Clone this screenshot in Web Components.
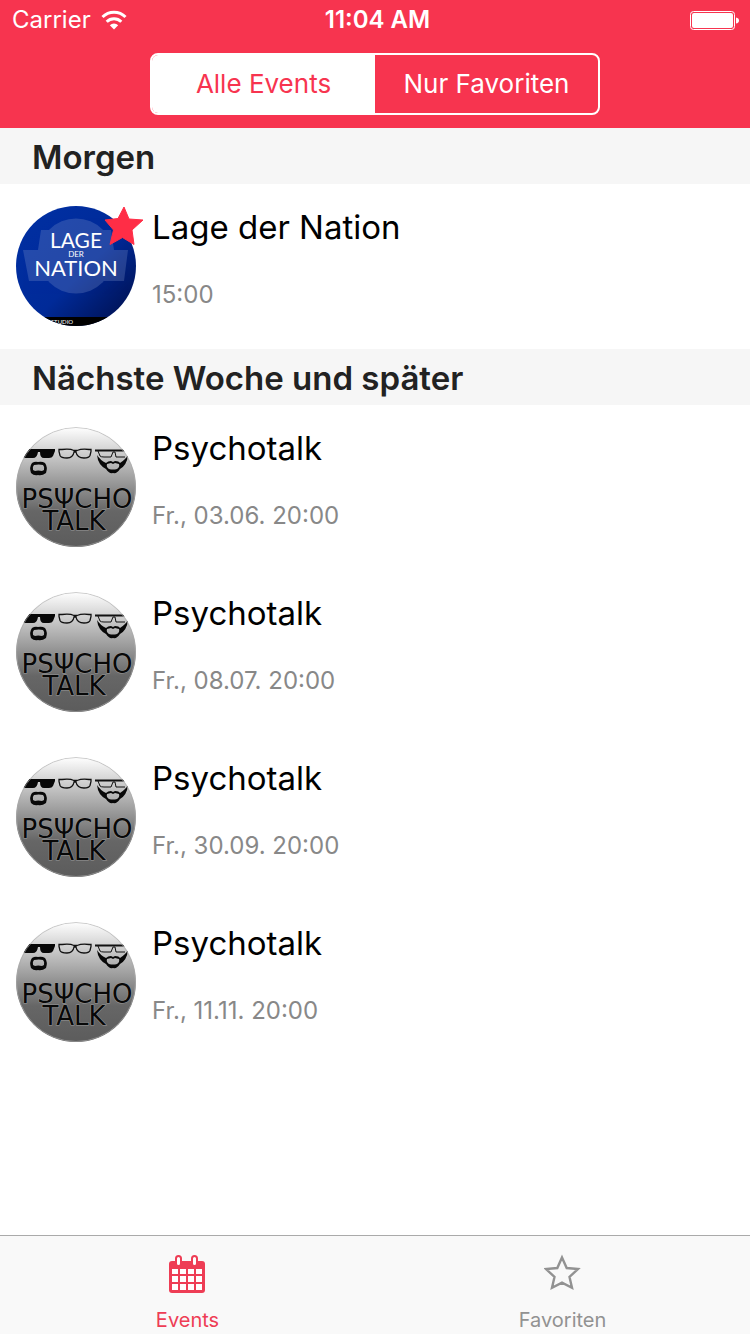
<!DOCTYPE html>
<html lang="de">
<head>
<meta charset="utf-8">
<meta name="viewport" content="width=device-width, initial-scale=1">
<title>Events</title>
<style>
  body { margin: 0; background: #fff; color: #000; font-family: Inter, "Liberation Sans", sans-serif; }
</style>
</head>
<body>
<events-app></events-app>

<template id="t-app">
  <style>
    :host { display: flex; flex-direction: column; min-height: 100vh; }
    header { background: #f7344f; color: #fff; padding-bottom: 13px; }
    main { flex: 1; }
  </style>
  <header>
    <status-bar></status-bar>
    <segmented-control>
      <span slot="first">Alle Events</span>
      <span slot="second">Nur Favoriten</span>
    </segmented-control>
  </header>
  <main>
    <event-section>
      <span slot="title">Morgen</span>
      <event-row favorite><lage-cover slot="cover"></lage-cover>Lage der Nation<span slot="time">15:00</span></event-row>
    </event-section>
    <event-section>
      <span slot="title">Nächste Woche und später</span>
      <event-row><psycho-cover slot="cover"></psycho-cover>Psychotalk<span slot="time">Fr., 03.06. 20:00</span></event-row>
      <event-row><psycho-cover slot="cover"></psycho-cover>Psychotalk<span slot="time">Fr., 08.07. 20:00</span></event-row>
      <event-row><psycho-cover slot="cover"></psycho-cover>Psychotalk<span slot="time">Fr., 30.09. 20:00</span></event-row>
      <event-row><psycho-cover slot="cover"></psycho-cover>Psychotalk<span slot="time">Fr., 11.11. 20:00</span></event-row>
    </event-section>
  </main>
  <tab-bar></tab-bar>
</template>

<template id="t-status">
  <style>
    :host { display: grid; grid-template-columns: 1fr auto 1fr; align-items: center; height: 40px; padding: 0 11px 0 12px; font-size: 24px; line-height: 40px; }
    .carrier { display: flex; align-items: center; gap: 10px; }
    .time { font-weight: 600; padding-left: 4px; }
    .battery { justify-self: end; }
    svg { display: block; }
  </style>
  <span class="carrier">Carrier
    <svg width="26" height="20" viewBox="0 0 26 20" fill="none" stroke="#fff" stroke-width="3" aria-hidden="true">
      <path d="M1.500 7a16.300 16.300 0 0 1 23 0M5.700 11.800a10.400 10.400 0 0 1 14.600 0"/>
      <path d="M13 19.500l-4.200-4.200a6 6 0 0 1 8.400 0z" fill="#fff" stroke="none"/>
    </svg>
  </span>
  <span class="time">11:04 AM</span>
  <svg class="battery" width="49" height="20" viewBox="0 0 49 20" aria-hidden="true">
    <rect x=".5" y="1.500" width="44" height="18" rx="3" fill="none" stroke="#fff"/>
    <rect x="2" y="3" width="41" height="15" rx="2" fill="#fff"/>
    <path d="M46 7.500q3 .5 3 3t-3 3z" fill="#fff"/>
  </svg>
</template>

<template id="t-segmented">
  <style>
    :host { display: grid; grid-template-columns: 1fr 1fr; box-sizing: border-box; width: 60%; height: 62px; margin: 13px auto 0; border: 2px solid #fff; border-radius: 8px; overflow: hidden; }
    button { border: 0; padding: 0; margin: 0; font: inherit; font-size: 26px; line-height: 58px; color: #fff; background: none; }
    button[aria-pressed="true"] { background: #fff; color: #f7344f; }
  </style>
  <button type="button" aria-pressed="true"><slot name="first"></slot></button>
  <button type="button" aria-pressed="false"><slot name="second"></slot></button>
</template>

<template id="t-section">
  <style>
    :host { display: block; }
    h2 { margin: 0; padding: 2px 32px 0; background: #f6f6f6; color: #222; font-size: 33px; font-weight: 600; line-height: 54px; }
  </style>
  <h2><slot name="title"></slot></h2>
  <slot></slot>
</template>

<template id="t-row">
  <style>
    :host { display: flex; gap: 16px; box-sizing: border-box; min-height: 165px; padding: 22px 16px; }
    .cover { position: relative; flex: none; width: 120px; height: 120px; }
    .star { display: none; position: absolute; top: 0; right: -8px; }
    :host([favorite]) .star { display: block; }
    h3 { margin: 0; font-size: 33px; font-weight: 400; line-height: 42px; }
    p { margin: 32px 0 0; color: #888; font-size: 24px; line-height: 30px; }
  </style>
  <div class="cover">
    <slot name="cover"></slot>
    <svg class="star" width="40" height="40" viewBox="0 0 40 40" aria-label="Favorit">
      <path d="M20 1l5 12 14 1-11 10 2 14.500-11.500-7L6 38.500 9.500 24 1 14l13-1.500z" fill="#ff2d46" stroke="#ff2d46" stroke-linejoin="round"/>
    </svg>
  </div>
  <div>
    <h3><slot></slot></h3>
    <p><slot name="time"></slot></p>
  </div>
</template>

<template id="t-lage">
  <style>
    :host { display: block; }
    svg { display: block; border-radius: 50%; }
    text { font-family: Lato, sans-serif; fill: #fff; text-anchor: middle; }
  </style>
  <svg width="120" height="120" viewBox="0 0 120 120">
    <defs>
      <linearGradient id="g" x1="0" y1="0" x2="1" y2="1">
        <stop offset="0" stop-color="#0030a4"/><stop offset=".55" stop-color="#002a98"/><stop offset="1" stop-color="#000c44"/>
      </linearGradient>
    </defs>
    <rect width="120" height="120" fill="url(#g)"/>
    <g fill="#8ba0cf" opacity=".26">
      <path d="M25 24h70l3 20h14l-4 31H13L7 44h15z"/>
      <circle cx="60" cy="50" r="37.500"/>
    </g>
    <text x="60" y="42" font-size="21">LAGE</text>
    <text x="60" y="51" font-size="8">DER</text>
    <text x="60" y="70" font-size="22">NATION</text>
    <rect y="111" width="120" height="9" fill="#000"/>
    <text x="46" y="118" font-size="6">STUDIO</text>
  </svg>
</template>

<template id="t-psycho">
  <style>
    :host { display: block; }
    svg { display: block; border-radius: 50%; }
    text { font-family: "DejaVu Sans", sans-serif; font-size: 26px; text-anchor: middle; fill: #080808; stroke: #999; stroke-width: 1px; paint-order: stroke; }
  </style>
  <svg width="120" height="120" viewBox="0 0 120 120">
    <defs>
      <linearGradient id="g" x1="0" y1="0" x2="0" y2="1">
        <stop offset="0" stop-color="#fff"/><stop offset=".3" stop-color="#bbb"/><stop offset=".7" stop-color="#666"/><stop offset="1" stop-color="#5c5c5c"/>
      </linearGradient>
    </defs>
    <rect width="120" height="120" fill="url(#g)"/>
    <path d="M9 22h30v2l-2 5q-1 2-4 2h-5q-4 0-4-6h-2q-1 6-5 6H9q-2 0-2-2z" fill="#080808"/>
    <g fill="none" stroke="#111">
      <path d="M43 22.500h3q8-1 12 1h3q5-2 12-1h2v2l-1 4q-1 2.500-6 2.500-7 0-8-6h-2q-1 6-7 6-6 0-7-2.500l-1-4z" stroke-width="1.300"/>
      <path d="M79 23.500h33" stroke-width="2"/>
      <path d="M82 24l2 5q1 1 4 1h7l2-5h2l1 5h9"/>
    </g>
    <path fill-rule="evenodd" d="M16 36q3-2 6-1 4-1 7 1 3 4 1 10-4 3-8 2-4 1-7-2-2-6 1-10zM18 38q-2 2-1 5l2 1q3-1 7 0l2-1q1-3-1-5-4-1-9 0z" fill="#080808"/>
    <path fill-rule="evenodd" d="M81 28q3 5 9 8 2-2 5-2l2 1 2-1q4 0 5 2 6-4 8-8-1 10-8 14-3 5-7 4-4 1-7-4-8-4-9-14zM91 37q-1 3 2 5 4 1 8 0 3-2 2-5l-4-1-2 1-2-1z" fill="#080808"/>
    <text x="61" y="81">PSΨCHO</text>
    <text x="58" y="103">TALK</text>
    <circle cx="60" cy="60" r="59.500" fill="none" stroke="#aaa" stroke-opacity=".6"/>
  </svg>
</template>

<template id="t-tabs">
  <style>
    :host { display: block; background: #f9f9f9; border-top: 1px solid #aaa; }
    nav { display: grid; grid-template-columns: 1fr 1fr; }
    a { display: flex; flex-direction: column; align-items: center; gap: 12px; height: 80px; padding: 18px 0 0; color: #929292; text-decoration: none; font-size: 20px; line-height: 28px; }
    a[aria-current] { color: #ee3d55; }
    svg { display: block; }
  </style>
  <nav>
    <a href="#events" aria-current="page">
      <svg width="38" height="40" viewBox="0 0 38 40" aria-hidden="true">
        <path d="M3 7h30q3 0 3 3v26q0 3-3 3H3q-3 0-3-3V10q0-3 3-3z" fill="currentColor"/>
        <path d="M3 15h6v5H3zM11 15h6v5h-6zM19 15h6v5h-6zM27 15h6v5h-6zM3 22h6v6H3zM11 22h6v6h-6zM19 22h6v6h-6zM27 22h6v6h-6zM3 30h6v6H3zM11 30h6v6h-6zM19 30h6v6h-6zM27 30h6v6h-6z" fill="#fff"/>
        <rect x="7" y="2" width="5" height="10" rx="2.500" fill="#fff" stroke="currentColor" stroke-width="2"/>
        <rect x="23" y="2" width="5" height="10" rx="2.500" fill="#fff" stroke="currentColor" stroke-width="2"/>
      </svg>
      <span>Events</span>
    </a>
    <a href="#favoriten">
      <svg width="38" height="40" viewBox="0 0 38 40" fill="none" stroke="currentColor" stroke-width="2.400" aria-hidden="true">
        <path d="M18 3.500l4.700 10.500 11.300 1-8.500 8 2.500 10.700-10-5-10 5L10.500 23 2 15l11.300-1z"/>
      </svg>
      <span>Favoriten</span>
    </a>
  </nav>
</template>

<script>
  class TemplateElement extends HTMLElement {
    constructor() {
      super();
      const template = document.getElementById(this.constructor.template);
      this.attachShadow({ mode: "open" }).append(template.content.cloneNode(true));
    }
  }
  const define = (name, template) =>
    customElements.define(name, class extends TemplateElement { static template = template; });

  define("status-bar", "t-status");
  define("segmented-control", "t-segmented");
  define("event-section", "t-section");
  define("event-row", "t-row");
  define("lage-cover", "t-lage");
  define("psycho-cover", "t-psycho");
  define("tab-bar", "t-tabs");
  define("events-app", "t-app");
</script>
</body>
</html>
